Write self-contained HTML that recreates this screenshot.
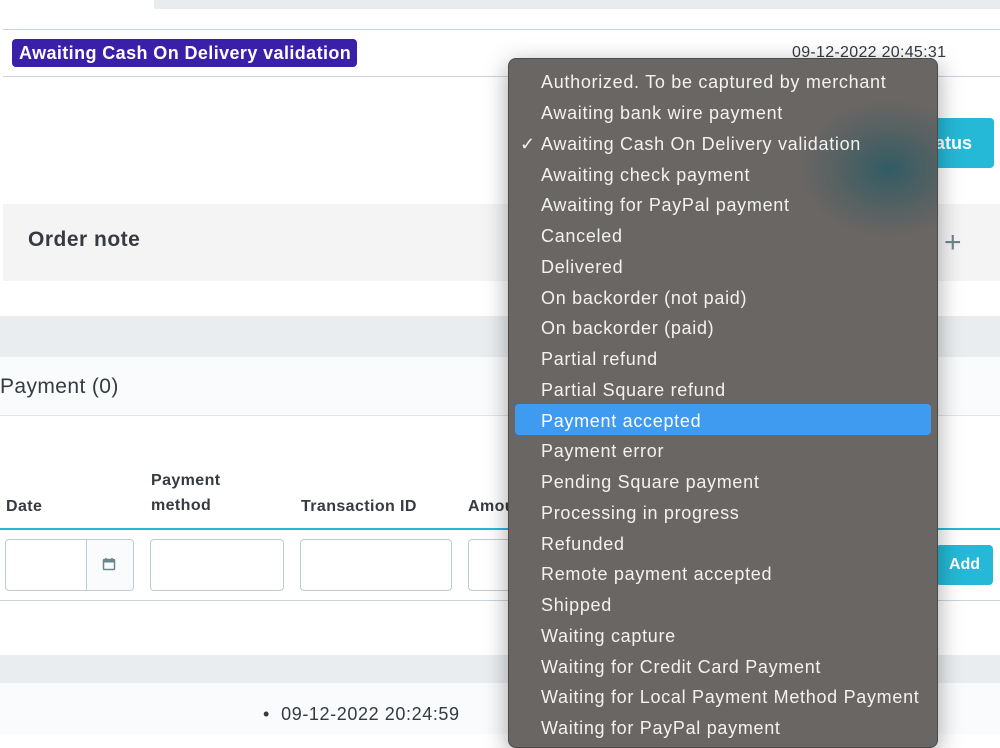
<!DOCTYPE html>
<html><head><meta charset="utf-8"><style>
*{box-sizing:border-box;margin:0;padding:0}
body{width:1000px;height:734px;overflow:hidden;background:#fff;font-family:"Liberation Sans",sans-serif;color:#363a41;position:relative}
.a{position:absolute}
.dd{left:508px;top:58px;width:430px;height:690px;border-radius:8px;background:radial-gradient(ellipse 90px 70px at 380px 110px,rgba(40,90,100,.85),rgba(60,90,95,.4) 60%,rgba(106,102,100,0) 100%),#6a6664;border:1px solid #4a4a4a;box-shadow:0 6px 24px rgba(0,0,0,.35)}
.it{position:absolute;left:32px;font-size:18px;color:#f2f2f2;white-space:nowrap;line-height:22px;letter-spacing:.7px}
.hl{position:absolute;left:6px;width:416px;top:345px;height:31px;background:#3e9bf0;border-radius:4px}
.th{font-weight:bold;font-size:16px;color:#363a41;line-height:25px;letter-spacing:.4px}
.inp{border:1px solid #bbcdd2;border-radius:4px;background:#fff;height:52px;top:539px}
</style></head><body>
<div class="a" style="left:154px;top:0;width:846px;height:9px;background:#e9ecef"></div>
<div class="a" style="left:3px;top:29px;width:997px;height:1px;background:#c7d6da"></div>
<div class="a" style="left:3px;top:76px;width:997px;height:1px;background:#c7d6da"></div>
<div class="a" style="left:12px;top:39px;width:345px;height:28px;background:#3a1fa8;border-radius:4px;color:#fff;font-weight:bold;font-size:18px;line-height:28px;padding-left:7px;letter-spacing:.4px">Awaiting Cash On Delivery validation</div>
<div class="a" style="left:792px;top:44px;font-size:16px;letter-spacing:.3px">09-12-2022 20:45:31</div>
<div class="a" style="left:900px;top:118px;width:94px;height:50px;background:#25b9d7;border-radius:4px;color:#fff;font-weight:bold;font-size:18px;line-height:50px;text-align:right;padding-right:22px">Status</div>
<div class="a" style="left:3px;top:204px;width:997px;height:77px;background:#f4f4f5"></div>
<div class="a" style="left:28px;top:228px;font-size:21px;font-weight:bold;letter-spacing:.5px">Order note</div>
<div class="a" style="left:944px;top:226px;font-size:30px;color:#6c868e;line-height:34px">+</div>
<div class="a" style="left:0;top:316px;width:1000px;height:41px;background:#eaedef"></div>
<div class="a" style="left:0;top:357px;width:1000px;height:59px;background:#fafbfc;border-bottom:1px solid #dfe5e8"></div>
<div class="a" style="left:0;top:375px;font-size:21px;letter-spacing:.4px">Payment (0)</div>
<div class="a th" style="left:6px;top:494px">Date</div>
<div class="a th" style="left:151px;top:468px">Payment<br>method</div>
<div class="a th" style="left:301px;top:494px">Transaction ID</div>
<div class="a th" style="left:468px;top:494px">Amount</div>
<div class="a" style="left:0;top:528px;width:1000px;height:2px;background:#25b9d7"></div>
<div class="a inp" style="left:5px;width:129px"></div>
<div class="a" style="left:86px;top:540px;width:47px;height:50px;background:#fafbfc;border-left:1px solid #bbcdd2;border-radius:0 4px 4px 0"></div>
<svg class="a" style="left:102px;top:557px" width="14" height="14" viewBox="0 0 14 14"><rect x="1.5" y="2.5" width="11" height="10" rx="1" fill="none" stroke="#6c868e" stroke-width="1.5"/><rect x="1.5" y="2.5" width="11" height="3" fill="#6c868e"/><line x1="4" y1="1" x2="4" y2="3" stroke="#6c868e" stroke-width="1.5"/><line x1="10" y1="1" x2="10" y2="3" stroke="#6c868e" stroke-width="1.5"/></svg>
<div class="a inp" style="left:150px;width:134px"></div>
<div class="a inp" style="left:300px;width:152px"></div>
<div class="a inp" style="left:468px;width:60px"></div>
<div class="a" style="left:936px;top:545px;width:57px;height:40px;background:#25b9d7;border-radius:4px;color:#fff;font-weight:bold;font-size:16px;line-height:40px;text-align:center">Add</div>
<div class="a" style="left:0;top:600px;width:1000px;height:1px;background:#c7d6da"></div>
<div class="a" style="left:0;top:655px;width:1000px;height:28px;background:#eaedef"></div>
<div class="a" style="left:0;top:683px;width:1000px;height:51px;background:#fafbfc"></div>
<div class="a" style="left:263px;top:704px;font-size:18px;letter-spacing:.6px">•&nbsp; 09-12-2022 20:24:59</div>
<div class="a dd">
<div class="hl"></div>
<div class="it" style="top:12px">Authorized. To be captured by merchant</div>
<div class="it" style="top:43px">Awaiting bank wire payment</div>
<div class="it" style="top:74px"><span style="position:absolute;left:-21px">✓</span>Awaiting Cash On Delivery validation</div>
<div class="it" style="top:105px">Awaiting check payment</div>
<div class="it" style="top:135px">Awaiting for PayPal payment</div>
<div class="it" style="top:166px">Canceled</div>
<div class="it" style="top:197px">Delivered</div>
<div class="it" style="top:228px">On backorder (not paid)</div>
<div class="it" style="top:258px">On backorder (paid)</div>
<div class="it" style="top:289px">Partial refund</div>
<div class="it" style="top:320px">Partial Square refund</div>
<div class="it" style="top:351px;color:#fff">Payment accepted</div>
<div class="it" style="top:381px">Payment error</div>
<div class="it" style="top:412px">Pending Square payment</div>
<div class="it" style="top:443px">Processing in progress</div>
<div class="it" style="top:474px">Refunded</div>
<div class="it" style="top:504px">Remote payment accepted</div>
<div class="it" style="top:535px">Shipped</div>
<div class="it" style="top:566px">Waiting capture</div>
<div class="it" style="top:597px">Waiting for Credit Card Payment</div>
<div class="it" style="top:627px">Waiting for Local Payment Method Payment</div>
<div class="it" style="top:658px">Waiting for PayPal payment</div>
</div>
</body></html>
